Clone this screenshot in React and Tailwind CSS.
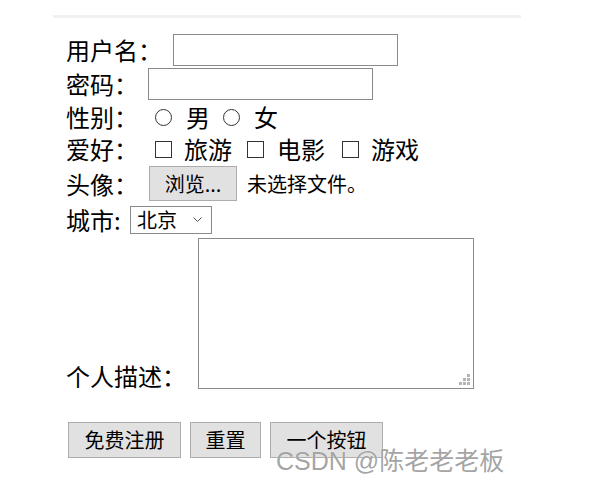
import React from 'react'

const font = { fontFamily: '"Noto Sans CJK SC", "Noto Sans", sans-serif' }

function Radio() {
  return <span className="block w-[17px] h-[17px] rounded-full border border-[#333] bg-white shrink-0" />
}

function Check() {
  return <span className="block w-[17px] h-[17px] border border-[#333] bg-white shrink-0" />
}

export default function App() {
  return (
    <div className="relative w-[605px] h-[496px] bg-white overflow-hidden text-black" style={font}>
      <div className="ml-[53px] mt-[15px] w-[468px] h-[3px] bg-[#f1f1f1]" />

      <form className="pl-[66px] text-[24px]">
        <div className="flex items-center h-[32px] mt-[16px]">
          <span className="w-[107px] whitespace-nowrap leading-none">用户名：</span>
          <input type="text" className="w-[225px] h-[32px] border border-[#8a8a8a] bg-white outline-none" />
        </div>

        <div className="flex items-center h-[32px] mt-[2px]">
          <span className="w-[82px] whitespace-nowrap leading-none">密码：</span>
          <input type="password" className="w-[225px] h-[32px] border border-[#8a8a8a] bg-white outline-none" />
        </div>

        <div className="flex items-center h-[32px] mt-[1px]">
          <span className="w-[89px] whitespace-nowrap leading-none">性别：</span>
          <Radio />
          <span className="ml-[14px] leading-none">男</span>
          <span className="ml-[13px]"><Radio /></span>
          <span className="ml-[14px] leading-none">女</span>
        </div>

        <div className="flex items-center h-[32px]">
          <span className="w-[89px] whitespace-nowrap leading-none">爱好：</span>
          <Check />
          <span className="ml-[12px] leading-none">旅游</span>
          <span className="ml-[15px]"><Check /></span>
          <span className="ml-[13px] leading-none">电影</span>
          <span className="ml-[17px]"><Check /></span>
          <span className="ml-[12px] leading-none">游戏</span>
        </div>

        <div className="flex items-center h-[35px] mt-[1px]">
          <span className="w-[83px] whitespace-nowrap leading-none">头像：</span>
          <button type="button" className="w-[88px] h-[35px] bg-[#e1e1e1] border border-[#adadad] text-[20px] leading-none">浏览...</button>
          <span className="ml-[10px] text-[20px] leading-none">未选择文件。</span>
        </div>

        <div className="flex items-center h-[32px] mt-[3px]">
          <span className="w-[64px] whitespace-nowrap leading-none">城市:</span>
          <div className="relative w-[82px] h-[28px]">
            <select className="block appearance-none w-full h-full border border-[#8a8a8a] bg-white pl-[6px] text-[20px] leading-none outline-none">
              <option>北京</option>
              <option>上海</option>
              <option>广州</option>
            </select>
            <svg className="absolute right-[10px] top-[11px] pointer-events-none" width="9" height="5" viewBox="0 0 9 5">
              <path d="M0.5 0.5 L4.5 4.5 L8.5 0.5" fill="none" stroke="#555" strokeWidth="1" />
            </svg>
          </div>
        </div>

        <div className="flex items-end mt-[2px]">
          <span className="w-[132px] whitespace-nowrap leading-[24px] mb-px">个人描述：</span>
          <div className="relative w-[276px] h-[151px]">
            <textarea className="w-full h-full border border-[#8a8a8a] resize-none outline-none block" />
            <svg className="absolute right-[3px] bottom-[3px] pointer-events-none" width="12" height="12" viewBox="0 0 12 12">
              <rect x="8" y="0" width="3" height="3" fill="#b4b4b4" />
              <rect x="4" y="4" width="3" height="3" fill="#b4b4b4" />
              <rect x="8" y="4" width="3" height="3" fill="#b4b4b4" />
              <rect x="0" y="8" width="3" height="3" fill="#b4b4b4" />
              <rect x="4" y="8" width="3" height="3" fill="#b4b4b4" />
              <rect x="8" y="8" width="3" height="3" fill="#b4b4b4" />
            </svg>
          </div>
        </div>

        <div className="flex items-center mt-[33px] ml-[2px] gap-[9px] text-[20px]">
          <button type="submit" className="w-[113px] h-[36px] bg-[#e1e1e1] border border-[#adadad] leading-none">免费注册</button>
          <button type="reset" className="w-[71px] h-[36px] bg-[#e1e1e1] border border-[#adadad] leading-none">重置</button>
          <button type="button" className="w-[113px] h-[36px] bg-[#e1e1e1] border border-[#adadad] leading-none">一个按钮</button>
        </div>
      </form>

      <div
        className="absolute left-[276px] top-[445px] text-[25px] leading-[32px] whitespace-nowrap text-[#8c8c8c]/80 pointer-events-none"
        style={{ fontFamily: '"Liberation Sans", "Noto Sans CJK SC", sans-serif', textShadow: '0 0 1px #fff' }}
      >
        CSDN @陈老老老板
      </div>
    </div>
  )
}
